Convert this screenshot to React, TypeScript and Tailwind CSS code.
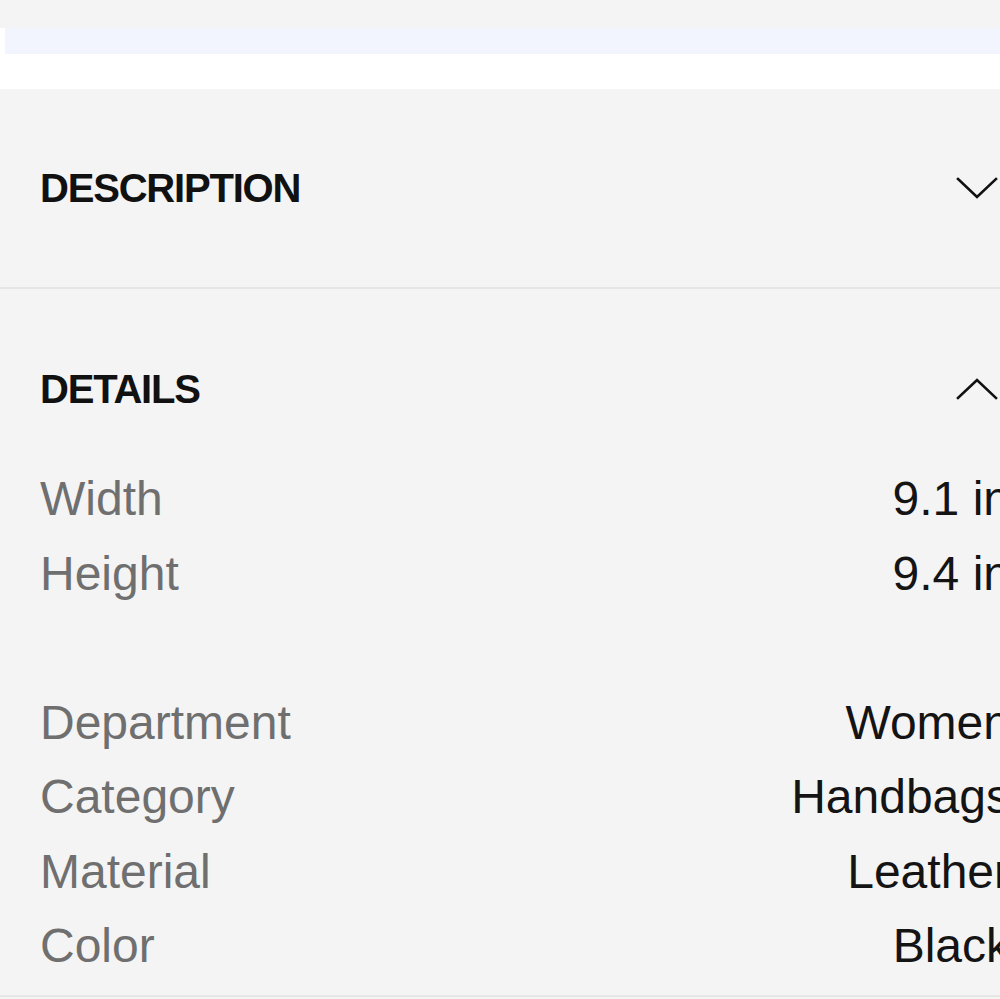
import React from "react";

const dims = [
  { label: "Width", value: "9.1 in" },
  { label: "Height", value: "9.4 in" },
];

const info = [
  { label: "Department", value: "Women" },
  { label: "Category", value: "Handbags" },
  { label: "Material", value: "Leather" },
  { label: "Color", value: "Black" },
];

const Chevron = ({ up }: { up?: boolean }) => (
  <svg
    width="42"
    height="22"
    viewBox="0 0 42 22"
    fill="none"
    stroke="#111111"
    strokeWidth="2.6"
    strokeLinecap="square"
    className="mr-[12px]"
  >
    {up ? <path d="M2 20 L21 2 L40 20" /> : <path d="M2 2 L21 20 L40 2" />}
  </svg>
);

const Row = ({ label, value }: { label: string; value: string }) => (
  <div className="flex justify-between leading-[74.5px] text-[48px]">
    <span className="text-[#6f6f6f]">{label}</span>
    <span className="text-[#141414]">{value}</span>
  </div>
);

export default function App() {
  return (
    <div
      className="w-full h-[999px] overflow-hidden bg-[#f4f4f4]"
      style={{ fontFamily: '"Liberation Sans", Arial, sans-serif' }}
    >
      <div className="h-[28px]" />
      <div className="h-[61px] bg-white">
        <div className="ml-[5px] h-[26px] bg-[#f2f5fd]" />
      </div>

      <div className="w-[1050px]">
        <div className="h-[198px] flex items-center justify-between pl-[40px] pr-[40px]">
          <h2 className="text-[40px] leading-[48px] font-bold tracking-[-1.2px] text-[#111111]">
            DESCRIPTION
          </h2>
          <Chevron />
        </div>
      </div>
      <div className="h-[2px] bg-[#e6e6e6]" />

      <div className="w-[1050px] px-[40px]">
        <div className="flex items-center justify-between pt-[76px] pb-[49px]">
          <h2 className="text-[40px] leading-[48px] font-bold tracking-[-1.2px] text-[#111111]">
            DETAILS
          </h2>
          <Chevron up />
        </div>

        <div className="flex flex-col">
          {dims.map((r) => (
            <Row key={r.label} {...r} />
          ))}
          <div className="h-[74.5px]" />
          {info.map((r) => (
            <Row key={r.label} {...r} />
          ))}
        </div>
      </div>
      <div className="mt-[11px] h-[2px] bg-[#e6e6e6]" />
    </div>
  );
}
